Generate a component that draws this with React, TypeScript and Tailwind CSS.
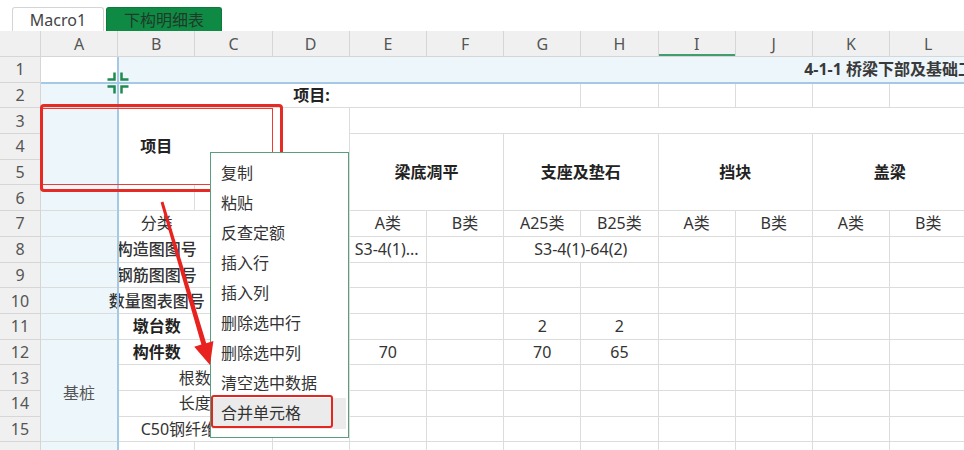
import clsx from 'clsx';

type Cell = {
  t?: string;
  cs?: number;
  rs?: number;
  cls?: string;
  inner?: string;
  noR?: boolean;
};

const TINT = 'bg-[#edf6fa]';
const LABEL = '-mx-6 text-center';
const blanks = (n: number): Cell[] => Array.from({ length: n }, () => ({}));

const COLS = ['A', 'B', 'C', 'D', 'E', 'F', 'G', 'H', 'I', 'J', 'K', 'L'];

const ROWS: Cell[][] = [
  // 1
  [
    { noR: true },
    { cs: 11, cls: TINT, t: '4-1-1 桥梁下部及基础工程数量表', inner: 'pl-[686px] font-bold text-[#3a3a3a]', noR: true },
  ],
  // 2
  [{ cls: TINT }, { cs: 6, t: '项目:', inner: 'pl-[175px] font-bold text-[#222]' }, ...blanks(5)],
  // 3
  [
    {
      cs: 3,
      rs: 3,
      t: '项目',
      cls: 'bg-[linear-gradient(to_right,#edf6fa_77px,transparent_77px)]',
      inner: 'text-center font-bold text-[#222]',
    },
    { rs: 4 },
    { cs: 8 },
  ],
  // 4
  [
    { cs: 2, rs: 3, t: '梁底凋平', inner: 'text-center font-semibold text-[#222]' },
    { cs: 2, rs: 3, t: '支座及垫石', inner: 'text-center font-semibold text-[#222]' },
    { cs: 2, rs: 3, t: '挡块', inner: 'text-center font-semibold text-[#222]' },
    { cs: 2, rs: 3, t: '盖梁', inner: 'text-center font-semibold text-[#222]' },
  ],
  // 5
  [],
  // 6
  [{ cls: TINT }, {}, {}],
  // 7
  [
    { cls: TINT },
    { t: '分类', inner: LABEL, noR: true },
    {},
    {},
    { t: 'A类' },
    { t: 'B类' },
    { t: 'A25类' },
    { t: 'B25类' },
    { t: 'A类' },
    { t: 'B类' },
    { t: 'A类' },
    { t: 'B类' },
  ],
  // 8
  [
    { cls: TINT },
    { t: '构造图图号', inner: `${LABEL} font-medium`, noR: true },
    {},
    {},
    { t: 'S3-4(1)...', inner: 'pl-[5px]' },
    {},
    { cs: 2, t: 'S3-4(1)-64(2)' },
    ...blanks(4),
  ],
  // 9
  [{ cls: TINT }, { t: '钢筋图图号', inner: `${LABEL} font-medium`, noR: true }, ...blanks(10)],
  // 10
  [{ cls: TINT }, { t: '数量图表图号', inner: `${LABEL} font-medium`, noR: true }, ...blanks(10)],
  // 11
  [
    { cls: TINT },
    { t: '墩台数', inner: `${LABEL} font-bold text-[#222]`, noR: true },
    ...blanks(4),
    { t: '2' },
    { t: '2' },
    ...blanks(4),
  ],
  // 12
  [
    { rs: 4, cls: TINT, t: '基桩', inner: 'pt-[6px] text-center text-[#555]' },
    { t: '构件数', inner: `${LABEL} font-bold text-[#222]`, noR: true },
    {},
    {},
    { t: '70' },
    {},
    { t: '70' },
    { t: '65' },
    ...blanks(4),
  ],
  // 13
  [{ cs: 2, t: '根数' }, ...blanks(9)],
  // 14
  [{ cs: 2, t: '长度' }, ...blanks(9)],
  // 15
  [{ cs: 2, t: 'C50钢纤维砼量' }, ...blanks(9)],
  // 16 (only its top edge is on screen)
  [{ cls: TINT }, ...blanks(11)],
];

const MENU = ['复制', '粘贴', '反查定额', '插入行', '插入列', '删除选中行', '删除选中列', '清空选中数据'];

function Crosshair() {
  return (
    <svg
      className="pointer-events-none absolute left-[106px] top-[71px] h-[24px] w-[24px]"
      viewBox="0 0 24 24"
      fill="none"
      stroke="#1f8b50"
      strokeWidth={2.5}
    >
      <path d="M8.5 1.5V8.5H1.5" />
      <path d="M15.5 1.5V8.5H22.5" />
      <path d="M8.5 22.5V15.5H1.5" />
      <path d="M15.5 22.5V15.5H22.5" />
    </svg>
  );
}

export default function App() {
  return (
    <div className="relative h-[450px] w-[964px] overflow-hidden bg-white font-['Noto_Sans','Noto_Sans_CJK_SC',sans-serif] text-[16px] text-[#333]">
      {/* sheet tabs */}
      <div className="flex h-[31px] items-end gap-[2px] pl-[12px]">
        <div className="flex h-[24px] w-[92px] items-center justify-center rounded-t-[3px] border border-b-0 border-[#d4d4d4] bg-white text-[#444]">
          Macro1
        </div>
        <div className="flex h-[24px] w-[116px] items-center justify-center rounded-t-[3px] border border-b-0 border-[#0b7a3b] bg-[#0f8a44] text-[#1f3a29]">
          下构明细表
        </div>
      </div>

      {/* grid */}
      <table className="w-[967.4px] table-fixed border-separate border-spacing-0">
        <colgroup>
          <col className="w-[41px]" />
          {COLS.map(c => (
            <col key={c} className="w-[77.2px]" />
          ))}
        </colgroup>
        <thead>
          <tr className="h-[26px]">
            <th className="border-r border-b border-[#d6d6d6] bg-[#f0f0f0] p-0" />
            {COLS.map(c => (
              <th
                key={c}
                className={clsx(
                  'border-r border-b border-[#d6d6d6] bg-[#f0f0f0] p-0 text-center font-normal text-[#555]',
                  c === 'I' && 'shadow-[inset_0_-2px_0_#3f9d70]'
                )}
              >
                {c}
              </th>
            ))}
          </tr>
        </thead>
        <tbody>
          {ROWS.map((row, r) => (
            <tr key={r} className="h-[25.7px]">
              <td className="border-r border-b border-[#d6d6d6] bg-[#f0f0f0] p-0 text-center text-[#555]">
                {r < 15 ? r + 1 : ''}
              </td>
              {row.map((c, i) => (
                <td
                  key={i}
                  colSpan={c.cs}
                  rowSpan={c.rs}
                  className={clsx('border-b border-[#dcdcdc] p-0 align-middle', !c.noR && 'border-r', c.cls)}
                >
                  {c.t && (
                    <div className={clsx('whitespace-nowrap leading-[20px]', c.inner ?? 'text-center')}>{c.t}</div>
                  )}
                </td>
              ))}
            </tr>
          ))}
        </tbody>
      </table>

      {/* frozen pane split lines */}
      <div className="pointer-events-none absolute bottom-0 left-[117px] top-[57px] w-[2px] bg-[#a5c8e4]" />
      <div className="pointer-events-none absolute left-[41px] right-0 top-[82px] h-[2px] bg-[#a5c8e4]" />
      <Crosshair />

      {/* selection + annotation */}
      <div className="pointer-events-none absolute left-[41px] top-[108px] h-[77px] w-[232px] border-[1.5px] border-[#f03a32]" />
      <div className="pointer-events-none absolute left-[40px] top-[104px] h-[88px] w-[243px] rounded-[4px] border-[3px] border-[#e62a24]" />

      {/* context menu */}
      <div className="absolute left-[210px] top-[152px] h-[286px] w-[139px] border-[1.5px] border-[#5a9f7d] bg-white pt-[4.5px]">
        {MENU.map(m => (
          <div key={m} className="flex h-[30px] items-center pl-[10px] text-[#333]">
            {m}
          </div>
        ))}
        <div className="relative ml-[0.5px] mr-[2.5px] flex h-[31px] items-center bg-[#ebebeb] pl-[9.5px] text-[#333]">
          合并单元格
          <span className="absolute left-[-1px] top-[-3px] h-[33px] w-[122px] rounded-[3px] border-[2.5px] border-[#e3261f]" />
        </div>
      </div>

      {/* arrow */}
      <svg className="pointer-events-none absolute left-0 top-0 h-[450px] w-[964px]" viewBox="0 0 964 450">
        <polygon
          fill="#e8231f"
          points="160.6,202.4 163.4,201.6 206.2,343.2 213.4,341.1 210,365 194.2,346.7 201.4,344.6"
        />
      </svg>
    </div>
  );
}
